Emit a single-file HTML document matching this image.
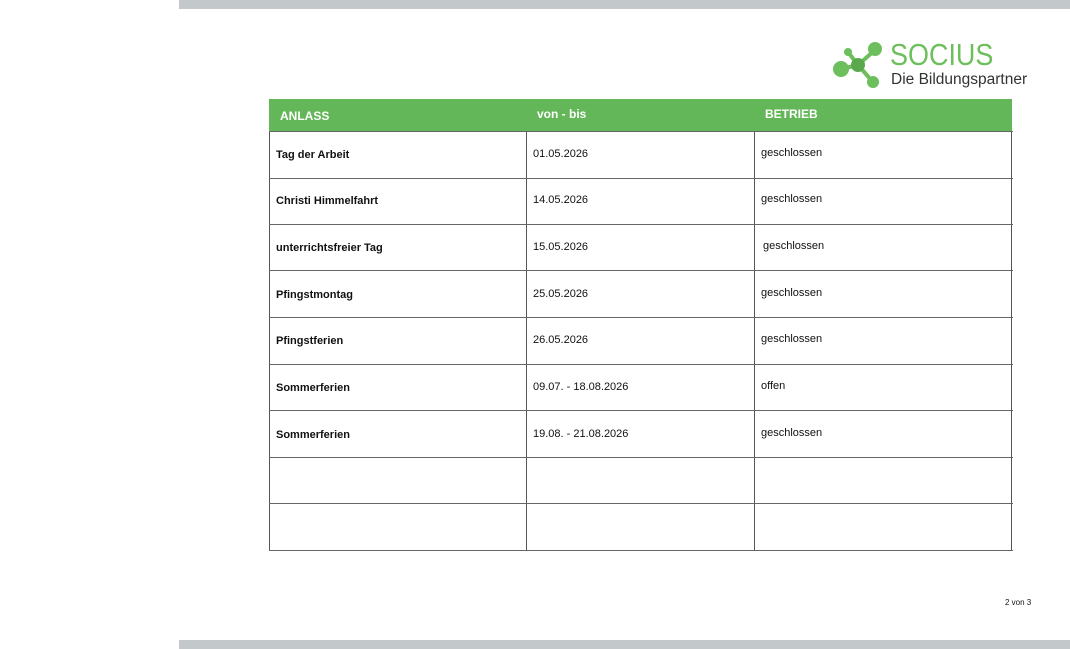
<!DOCTYPE html>
<html><head><meta charset="utf-8"><style>
body{margin:0;width:1070px;height:649px;background:#fff;position:relative;overflow:hidden;font-family:"Liberation Sans",Arial,sans-serif;}
.bar{position:absolute;left:179px;width:891px;height:9px;background:#c3c8cb;}
.hdr{position:absolute;left:269px;top:99px;width:743px;height:32px;background:#64b758;}
.h{position:absolute;color:#fff;font-weight:bold;font-size:12px;top:109px;}
.vl{position:absolute;width:1px;background:#555;top:131px;height:420px;}
.hl{position:absolute;left:269px;width:744px;height:1px;background:#666;}
.t{position:absolute;font-size:11px;color:#111;}
.b{font-weight:bold;}
</style></head><body>
<div class="bar" style="top:0"></div>
<div class="bar" style="top:640px"></div>
<svg style="position:absolute;left:832px;top:40px" width="54" height="50" viewBox="0 0 54 50">
<g stroke="#6cbf5c" stroke-width="4"><line x1="26" y1="25" x2="43" y2="10"/><line x1="26" y1="25" x2="9" y2="29"/><line x1="26" y1="25" x2="40" y2="41"/><line x1="26" y1="25" x2="16" y2="12"/></g>
<circle cx="43" cy="9" r="7" fill="#6cbf5c"/><circle cx="9" cy="29" r="8" fill="#6cbf5c"/><circle cx="41" cy="42" r="6" fill="#6cbf5c"/><circle cx="16" cy="12" r="4" fill="#6cbf5c"/><circle cx="26" cy="25" r="7" fill="#5aa84c"/>
</svg>
<div style="position:absolute;left:890px;top:38px;font-size:31px;color:#6cbf5c;line-height:34px;transform:scaleX(0.87);transform-origin:0 0">SOCIUS</div>
<div style="position:absolute;left:891px;top:71px;font-size:15.5px;color:#333;line-height:18px">Die Bildungspartner</div>
<div class="hdr"></div>
<div class="h" style="left:280px">ANLASS</div>
<div class="h" style="left:537px;top:107px">von - bis</div>
<div class="h" style="left:765px;top:107px">BETRIEB</div>
<div class="vl" style="left:269px"></div><div class="vl" style="left:526px"></div><div class="vl" style="left:754px"></div><div class="vl" style="left:1011px"></div>
<div class="hl" style="top:131px"></div><div class="hl" style="top:178px"></div><div class="hl" style="top:224px"></div><div class="hl" style="top:270px"></div><div class="hl" style="top:317px"></div><div class="hl" style="top:364px"></div><div class="hl" style="top:410px"></div><div class="hl" style="top:457px"></div><div class="hl" style="top:503px"></div><div class="hl" style="top:550px"></div>
<div class="t b" style="left:276px;top:149px">Tag der Arbeit</div><div class="t" style="left:533px;top:148px">01.05.2026</div><div class="t" style="left:761px;top:147px">geschlossen</div>
<div class="t b" style="left:276px;top:195px">Christi Himmelfahrt</div><div class="t" style="left:533px;top:194px">14.05.2026</div><div class="t" style="left:761px;top:193px">geschlossen</div>
<div class="t b" style="left:276px;top:242px">unterrichtsfreier Tag</div><div class="t" style="left:533px;top:241px">15.05.2026</div><div class="t" style="left:763px;top:240px">geschlossen</div>
<div class="t b" style="left:276px;top:289px">Pfingstmontag</div><div class="t" style="left:533px;top:288px">25.05.2026</div><div class="t" style="left:761px;top:287px">geschlossen</div>
<div class="t b" style="left:276px;top:335px">Pfingstferien</div><div class="t" style="left:533px;top:334px">26.05.2026</div><div class="t" style="left:761px;top:333px">geschlossen</div>
<div class="t b" style="left:276px;top:382px">Sommerferien</div><div class="t" style="left:533px;top:381px">09.07. - 18.08.2026</div><div class="t" style="left:761px;top:380px">offen</div>
<div class="t b" style="left:276px;top:429px">Sommerferien</div><div class="t" style="left:533px;top:428px">19.08. - 21.08.2026</div><div class="t" style="left:761px;top:427px">geschlossen</div>
<div class="t" style="left:1005px;top:598px;font-size:8px">2 von 3</div>
</body></html>
